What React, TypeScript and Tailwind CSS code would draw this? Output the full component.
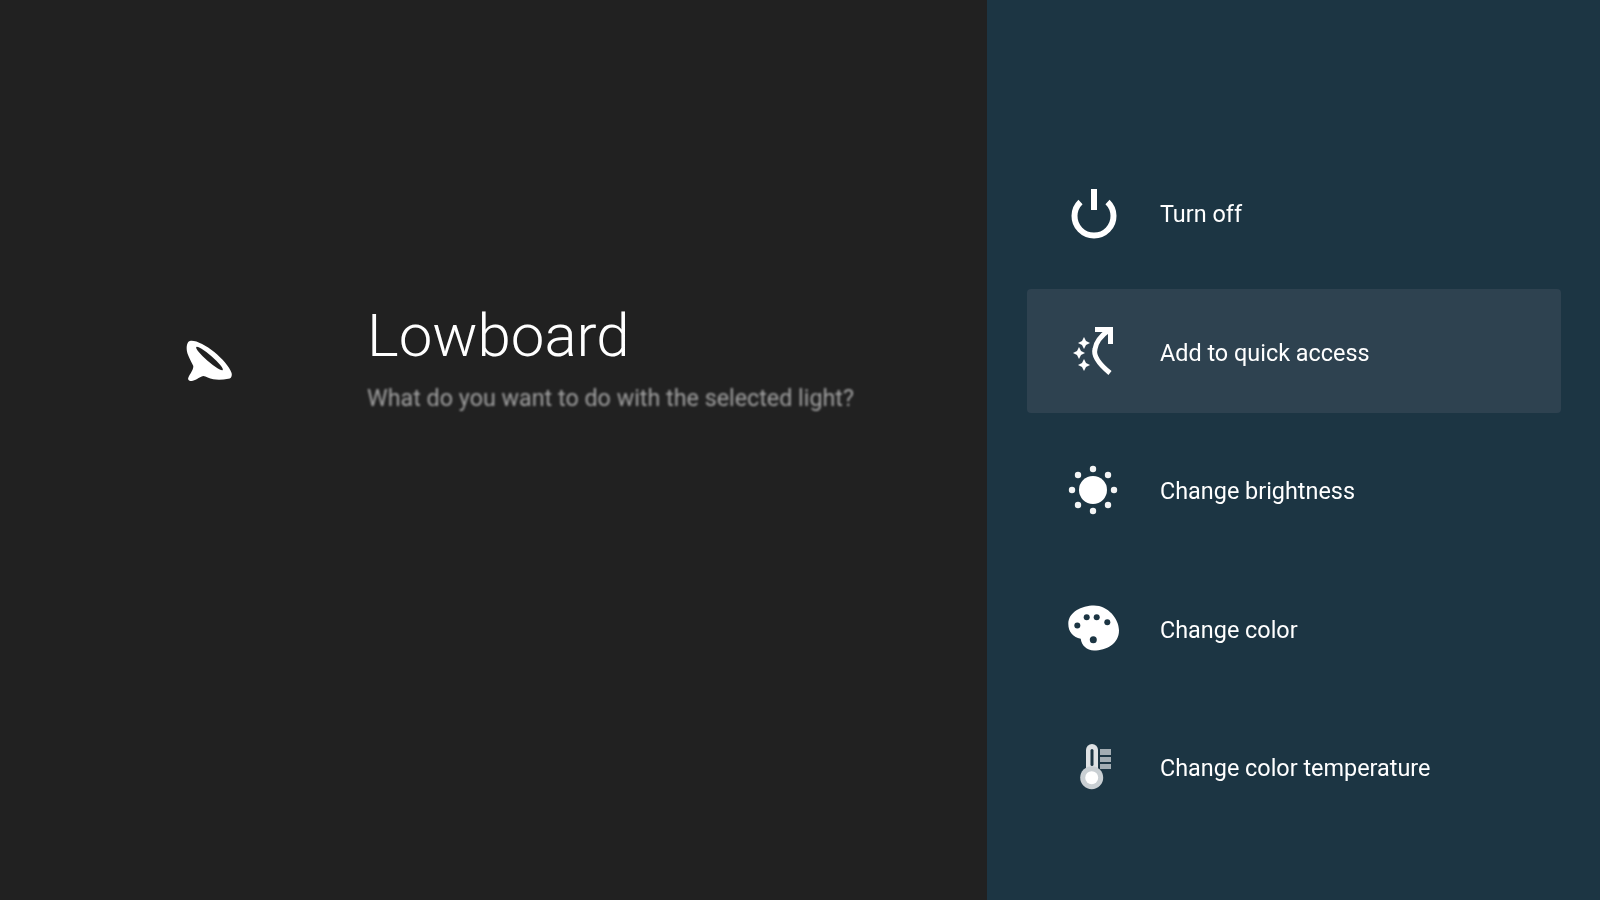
const font = { fontFamily: '"Roboto", "Liberation Sans", sans-serif' }

function PowerIcon() {
  return (
    <svg viewBox="0 0 64 64" className="h-16 w-16" fill="none" stroke="#fff" strokeWidth="6" strokeLinecap="butt">
      <path d="M46.500 20a19.500 19.500 0 1 1-27 0" />
      <path d="M33 7v21" />
    </svg>
  )
}

function QuickAccessIcon() {
  const stars = [[23, 23], [18, 33], [23, 45]]
  return (
    <svg viewBox="0 0 64 64" className="h-16 w-16" fill="none" stroke="#fff" strokeWidth="5">
      <path d="M49 53C38 44 32 36 34 29C35 22 41 15 48 10" />
      <path d="M34 9.500H49.500V24" />
      {stars.map(([x, y]) => (
        <path key={y} d={`M${x} ${y - 6}l2 4l4 2l-4 2l-2 4l-2-4l-4-2l4-2z`} fill="#fff" stroke="none" />
      ))}
    </svg>
  )
}

function SunIcon() {
  const dots = [[32, 10], [32, 52], [11, 31], [53, 31], [17, 16], [47, 16], [17, 46], [47, 46]]
  return (
    <svg viewBox="0 0 64 64" className="h-16 w-16" fill="#fff">
      <circle cx="32" cy="31" r="14" />
      {dots.map(([x, y]) => (
        <circle key={`${x}-${y}`} cx={x} cy={y} r="3.200" opacity="0.95" />
      ))}
    </svg>
  )
}

function PaletteIcon() {
  return (
    <svg viewBox="0 0 64 64" className="h-16 w-16">
      <path
        fill="#fff"
        d="M7.300 26.800C7.300 15.200 20.700 8.500 33 8.500C47 8.500 58 21.800 58 33.500C58 46.800 45.300 53.500 33 53.500C25.700 53.500 20.700 48.500 19.700 41.800C12.300 40.200 7.300 35.200 7.300 26.800Z"
      />
      <g fill="#1c3543">
        <circle cx="25.700" cy="20.200" r="3" />
        <circle cx="35.700" cy="20.200" r="3" />
        <circle cx="46.300" cy="25.200" r="3" />
        <circle cx="16.300" cy="28.500" r="3" />
        <circle cx="32.300" cy="42.800" r="3.500" />
      </g>
    </svg>
  )
}

function TemperatureIcon() {
  return (
    <svg viewBox="0 0 64 64" className="h-16 w-16">
      <rect x="25" y="8" width="12" height="30" rx="6" fill="#dfe2e4" />
      <rect x="29.500" y="13" width="3" height="17" rx="1.500" fill="#1c3543" />
      <circle cx="30.700" cy="41.700" r="11.500" fill="#c9cfd3" />
      <circle cx="30.700" cy="41.700" r="6.500" fill="#fff" />
      <rect x="39" y="13" width="11" height="6" fill="#a3adb3" />
      <rect x="39" y="21" width="11" height="5" fill="#a3adb3" />
      <rect x="39" y="28" width="11" height="5" fill="#a3adb3" />
    </svg>
  )
}

function DishIcon() {
  return (
    <svg viewBox="0 0 64 64" className="h-16 w-16">
      <path
        fill="#fff"
        d="M13 11C24 9 50 30 54.500 42.700C55.500 46 54 48.700 51.300 48.700C46 50 40 50 36.300 49.300C32 48.500 29 46.500 26.300 46C22 47 18 51 14.700 51C12 51 10.500 49.500 11.300 47.700C13 44 16.500 40 16.300 36C14 31 9.700 24 9.700 19.300C9.500 15.500 10.500 11.500 13 11Z"
      />
      <ellipse cx="32.500" cy="28.500" rx="17.500" ry="3" transform="rotate(41 32.500 28.500)" fill="#212121" />
    </svg>
  )
}

const actions = [
  { label: 'Turn off', icon: <PowerIcon /> },
  { label: 'Add to quick access', icon: <QuickAccessIcon />, active: true },
  { label: 'Change brightness', icon: <SunIcon /> },
  { label: 'Change color', icon: <PaletteIcon /> },
  { label: 'Change color temperature', icon: <TemperatureIcon /> },
]

export default function App() {
  return (
    <div className="flex h-screen w-full overflow-hidden" style={font}>
      <section className="w-[987px] shrink-0 bg-[#212121] pt-[296px] pl-[177px]">
        <div className="flex items-start gap-[126px]">
          <div className="mt-[34px] shrink-0 blur-[0.6px]">
            <DishIcon />
          </div>
          <div>
            <h1 className="text-[60px] leading-[80px] font-light text-white blur-[0.4px]">Lowboard</h1>
            <p className="mt-[6px] text-[23.300px] leading-[32px] text-[#a0a0a0] blur-[0.8px]">What do you want to do with the selected light?</p>
          </div>
        </div>
      </section>

      <section className="flex-1 bg-[#1c3543] pt-[150px] pr-[39.500px] pl-[40px]">
        <ul className="flex flex-col gap-[14.500px] blur-[0.6px]">
          {actions.map((action) => (
            <li
              key={action.label}
              className={`flex h-[124px] items-center gap-[35px] rounded-[4px] pl-[34px] text-white ${action.active ? 'bg-[#2e4250]' : ''}`}
            >
              <span className="mt-[3px] shrink-0">{action.icon}</span>
              <span className="mt-[4px] text-[23.400px] leading-[32px]">{action.label}</span>
            </li>
          ))}
        </ul>
      </section>
    </div>
  )
}
